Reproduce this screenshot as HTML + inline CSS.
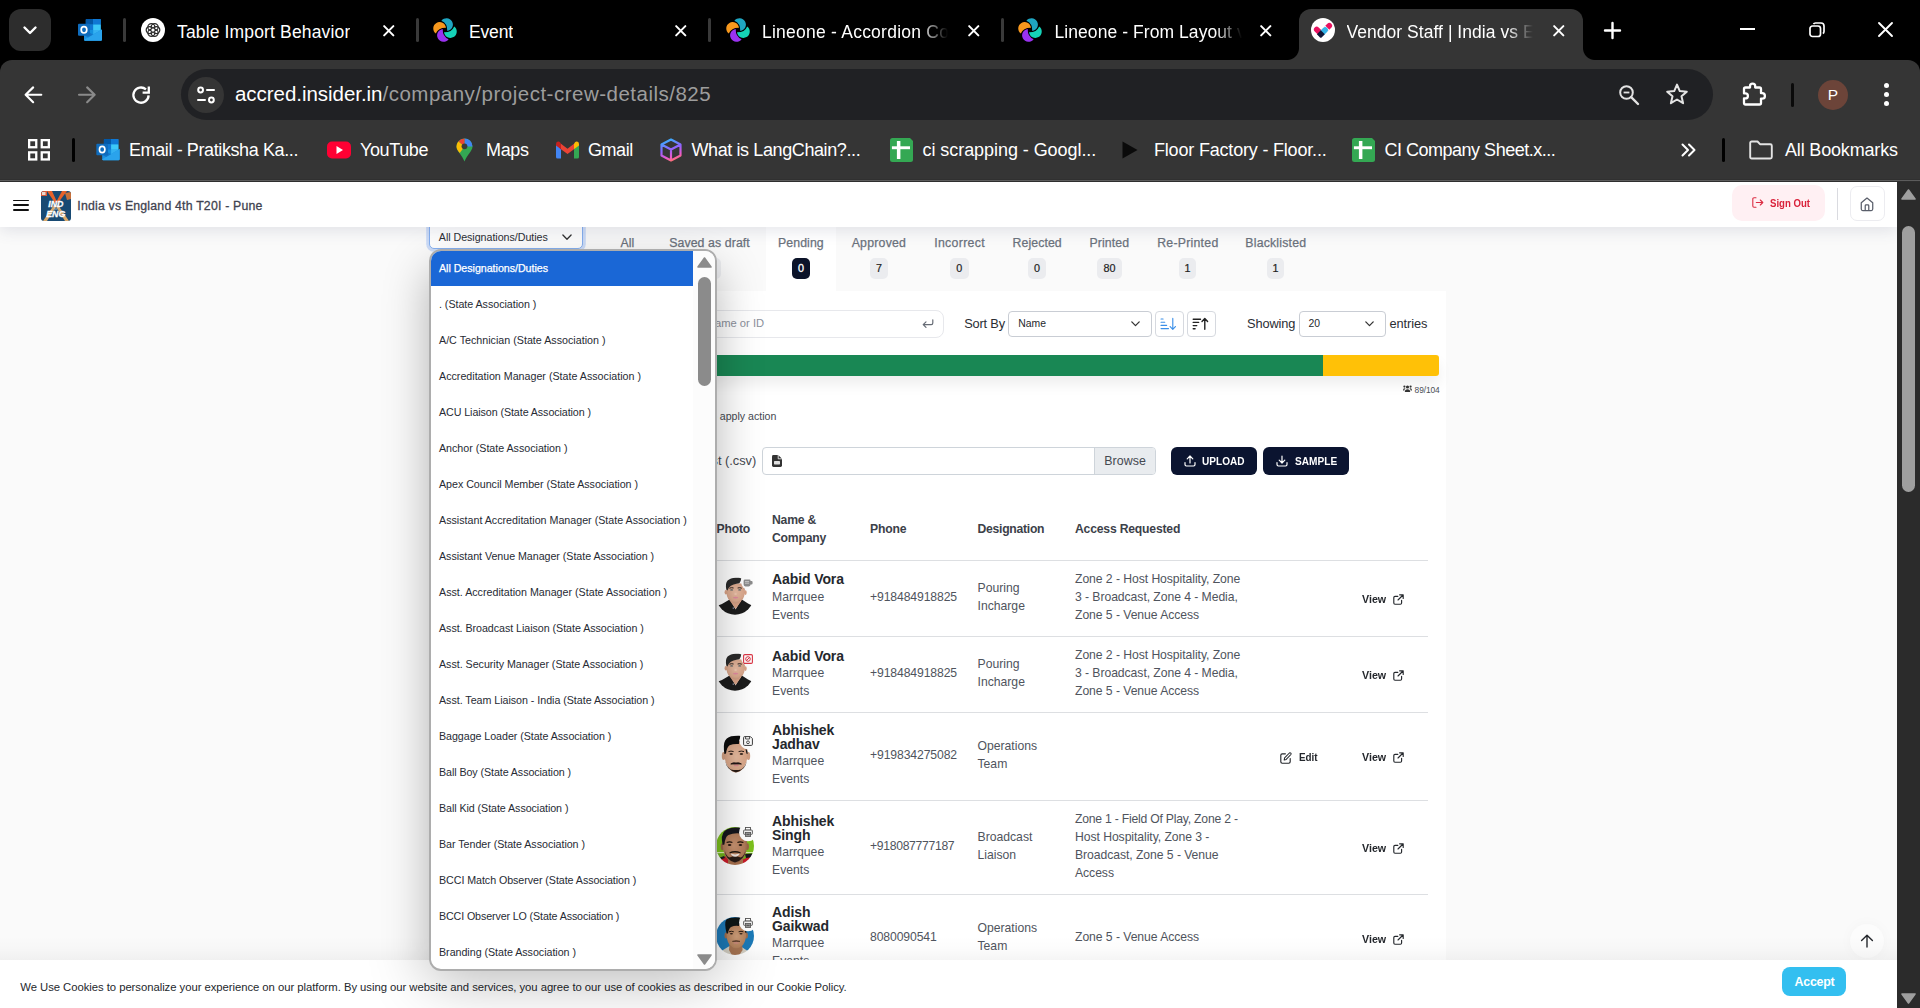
<!DOCTYPE html>
<html><head><meta charset="utf-8"><title>Vendor Staff</title>
<style>
*{box-sizing:border-box;margin:0;padding:0}
html,body{width:1920px;height:1008px;overflow:hidden;background:#fafafa;font-family:"Liberation Sans",sans-serif;}
.abs{position:absolute}
#chrome{position:absolute;left:0;top:0;width:1920px;height:182px;background:#000;color:#fff;z-index:50}
#toolbar{position:absolute;left:0;top:60px;width:1920px;height:121px;background:#353535;border-top-left-radius:12px;border-top-right-radius:12px}
#chromeline{position:absolute;left:0;top:179px;width:1920px;height:3px;background:linear-gradient(180deg,#303030 0,#303030 1px,#5c5c5c 1px,#5c5c5c 2px,#2e2e2e 2px)}
.tabtxt{position:absolute;top:20px;font-size:17.5px;line-height:24px;color:#fff;white-space:nowrap;overflow:hidden}
.tabsep{position:absolute;top:18px;width:3px;height:24px;background:#3a3a3a;border-radius:1.5px}
.bm{position:absolute;top:138px;font-size:18px;line-height:24px;color:#fff;white-space:nowrap}
#omni{position:absolute;left:180.5px;top:68.8px;width:1532.5px;height:51px;border-radius:25.5px;background:#202124}
#page{position:absolute;left:0;top:0;width:1920px;height:1008px;background:#fafafa;overflow:hidden}
.t{position:absolute;white-space:nowrap;line-height:14px;color:#4b5058}
.tab{position:absolute;top:236px;font-size:12.3px;line-height:14px;color:#6a717c;white-space:nowrap;-webkit-text-stroke:0.25px #6a717c}
.badge{position:absolute;top:258px;height:21px;border-radius:5px;background:#ebecef;color:#222;font-size:10.8px;line-height:21px;text-align:center;-webkit-text-stroke:0.2px #222}
.opt{position:absolute;left:439px;font-size:10.7px;line-height:14px;color:#272b34;white-space:nowrap}
.th{position:absolute;font-size:12.2px;font-weight:700;line-height:14px;color:#3c4149;white-space:nowrap;letter-spacing:-0.2px}
.nm{position:absolute;left:772px;font-size:14px;font-weight:700;line-height:13px;color:#25282d;white-space:nowrap;letter-spacing:-0.1px;margin-top:0.5px}
.td{position:absolute;font-size:12.2px;line-height:18px;color:#4f545d;white-space:nowrap}
.hr{position:absolute;left:716px;width:712px;height:1px;background:#dddfe2}
.view{position:absolute;left:1362px;font-size:11.4px;font-weight:700;line-height:14px;color:#25282d;transform:scaleX(0.938);transform-origin:0 0}
svg{position:absolute;overflow:visible}
</style></head><body>

<!-- ================= BROWSER CHROME ================= -->
<div id="chrome">
  <!-- tab search button -->
  <div class="abs" style="left:9px;top:9px;width:42px;height:42px;border-radius:12px;background:#2d2d2d"></div>
  <svg style="left:23px;top:26px" width="14" height="9" viewBox="0 0 14 9"><path d="M1.5 1.5 L7 7 L12.5 1.5" fill="none" stroke="#fff" stroke-width="2.4" stroke-linecap="round" stroke-linejoin="round"/></svg>

  <!-- pinned outlook tab -->
  <svg style="left:78px;top:19.2px" width="24" height="22" viewBox="0 0 24 22">
    <rect x="7.8" y="0" width="14.9" height="17.4" rx="1" fill="#1490df"/>
    <rect x="7.8" y="0" width="7.4" height="5.6" fill="#0358a7"/><rect x="15.2" y="0" width="7.5" height="5.6" fill="#0f78d4"/>
    <rect x="7.8" y="5.6" width="7.4" height="5.4" fill="#0f78d4"/><rect x="15.2" y="5.6" width="7.5" height="5.4" fill="#3cc8f8"/>
    <rect x="7.8" y="11" width="7.4" height="5" fill="#1490df"/><rect x="15.2" y="11" width="7.5" height="5" fill="#35b1f1"/>
    <path d="M6 10.4 L15 15.6 L24 10.4 V20.6 Q24 21.8 22.8 21.8 H7.2 Q6 21.8 6 20.6Z" fill="#1a8fe0"/>
    <path d="M6 20.8 L24 10.4 V20.6 Q24 21.8 22.8 21.8 H7.2 Q6 21.8 6 20.8Z" fill="#2aa3ec"/>
    <path d="M6 10.4 L15 15.6 L10 18.6 L6 16Z" fill="#1377c9"/>
    <rect x="0" y="4.8" width="12" height="12" rx="1" fill="#0f6cbd"/>
    <ellipse cx="6" cy="10.8" rx="2.8" ry="3.2" fill="none" stroke="#fff" stroke-width="1.7"/>
  </svg>
  <div class="tabsep" style="left:123px"></div>

  <!-- tab 1 -->
  <div class="abs" style="left:141px;top:18px;width:24px;height:24px;border-radius:12px;background:#fff"></div>
  <svg style="left:144px;top:21px" width="18" height="18" viewBox="0 0 18 18"><g fill="none" stroke="#2a2a2a" stroke-width="1.25"><circle cx="12.30" cy="9.00" r="3.5"/><circle cx="10.65" cy="11.86" r="3.5"/><circle cx="7.35" cy="11.86" r="3.5"/><circle cx="5.70" cy="9.00" r="3.5"/><circle cx="7.35" cy="6.14" r="3.5"/><circle cx="10.65" cy="6.14" r="3.5"/></g><circle cx="9" cy="9" r="1.6" fill="#fff"/></svg>
  <div class="tabtxt" style="left:177px;letter-spacing:0.15px">Table Import Behavior</div>
  <svg style="left:382.5px;top:24.5px" width="11.5" height="11.5" viewBox="0 0 13 13"><path d="M1.3 1.3 L11.7 11.7 M11.7 1.3 L1.3 11.7" stroke="#fff" stroke-width="2.3" stroke-linecap="round"/></svg>
  <div class="tabsep" style="left:416px"></div>

  <!-- tab 2 -->
  <svg class="pinw" style="left:433px;top:18px" width="24" height="24" viewBox="0 0 24 24"><use href="#pinwheel"/></svg>
  <div class="tabtxt" style="left:469px;letter-spacing:-0.15px">Event</div>
  <svg style="left:675px;top:24.5px" width="11.5" height="11.5" viewBox="0 0 13 13"><path d="M1.3 1.3 L11.7 11.7 M11.7 1.3 L1.3 11.7" stroke="#fff" stroke-width="2.3" stroke-linecap="round"/></svg>
  <div class="tabsep" style="left:708px"></div>

  <!-- tab 3 -->
  <svg style="left:726px;top:18px" width="24" height="24" viewBox="0 0 24 24"><use href="#pinwheel"/></svg>
  <div class="tabtxt" style="left:762px;width:190px;letter-spacing:0.237px;-webkit-mask-image:linear-gradient(90deg,#000 158px,transparent 186px)">Lineone - Accordion Com</div>
  <svg style="left:967.5px;top:24.5px" width="11.5" height="11.5" viewBox="0 0 13 13"><path d="M1.3 1.3 L11.7 11.7 M11.7 1.3 L1.3 11.7" stroke="#fff" stroke-width="2.3" stroke-linecap="round"/></svg>
  <div class="tabsep" style="left:1001px"></div>

  <!-- tab 4 -->
  <svg style="left:1018px;top:18px" width="24" height="24" viewBox="0 0 24 24"><use href="#pinwheel"/></svg>
  <div class="tabtxt" style="left:1054.5px;width:190px;letter-spacing:0.068px;-webkit-mask-image:linear-gradient(90deg,#000 160px,transparent 187px)">Lineone - From Layout vi</div>
  <svg style="left:1260px;top:24.5px" width="11.5" height="11.5" viewBox="0 0 13 13"><path d="M1.3 1.3 L11.7 11.7 M11.7 1.3 L1.3 11.7" stroke="#fff" stroke-width="2.3" stroke-linecap="round"/></svg>

  <!-- active tab -->
  <div class="abs" style="left:1299px;top:9px;width:284px;height:52px;background:#353535;border-radius:12px 12px 0 0"></div>
  <div class="abs" style="left:1287px;top:48px;width:12px;height:12px;background:radial-gradient(circle at 0 0,transparent 11.5px,#353535 12.5px)"></div>
  <div class="abs" style="left:1583px;top:48px;width:12px;height:12px;background:radial-gradient(circle at 100% 0,transparent 11.5px,#353535 12.5px)"></div>
  <div class="abs" style="left:1311px;top:18px;width:24px;height:24px;border-radius:12px;background:#fff"></div>
  <svg style="left:1311px;top:18px" width="24" height="24" viewBox="0 0 24 24">
    <path d="M5.7 11.5 L9.8 15.6" stroke="#e8125f" stroke-width="5.6" stroke-linecap="round"/>
    <path d="M16.3 9.7 L18.3 7.7" stroke="#e8125f" stroke-width="5.6" stroke-linecap="round"/>
    <path d="M14.3 7.7 L18.3 11.7 L16.3 13.7 L12.3 9.7Z" fill="#fff"/>
    <path d="M11.8 14.2 L14.1 11.9" stroke="#35b5ea" stroke-width="5.6" stroke-linecap="round"/>
    <path d="M9.8 12.3 L13.8 16.2 L10.6 19.4 Q9.8 20.2 9 19.4 L5.9 16.2Z" fill="#10183a"/>
  </svg>
  <div class="tabtxt" style="left:1346.5px;width:190px;letter-spacing:0.04px;-webkit-mask-image:linear-gradient(90deg,#000 160px,transparent 186px)">Vendor Staff | India vs En</div>
  <svg style="left:1552.8px;top:24.5px" width="11.5" height="11.5" viewBox="0 0 13 13"><path d="M1.3 1.3 L11.7 11.7 M11.7 1.3 L1.3 11.7" stroke="#fff" stroke-width="2.3" stroke-linecap="round"/></svg>

  <!-- new tab + window controls -->
  <svg style="left:1604px;top:22px" width="17" height="17" viewBox="0 0 17 17"><path d="M8.5 1 V16 M1 8.5 H16" stroke="#fff" stroke-width="2.4" stroke-linecap="round"/></svg>
  <div class="abs" style="left:1740px;top:28px;width:15px;height:2px;background:#fff"></div>
  <svg style="left:1809px;top:22px" width="16" height="16" viewBox="0 0 16 16"><rect x="1" y="4" width="10.5" height="10.5" rx="2.5" fill="none" stroke="#fff" stroke-width="1.7"/><path d="M4.5 2.2 Q5 1 6.5 1 H12 Q15 1 15 4 V9.5 Q15 11 13.8 11.5" fill="none" stroke="#fff" stroke-width="1.7"/></svg>
  <svg style="left:1878px;top:22px" width="15" height="15" viewBox="0 0 15 15"><path d="M1 1 L14 14 M14 1 L1 14" stroke="#fff" stroke-width="1.9" stroke-linecap="round"/></svg>

  <div id="toolbar"></div>
  <div id="chromeline"></div>

  <!-- nav buttons -->
  <svg style="left:23.9px;top:86.3px" width="18.3" height="17.6" viewBox="0 0 18 17"><path d="M9 1.2 L1.6 8.5 L9 15.8 M2 8.5 H17" fill="none" stroke="#fff" stroke-width="2.1" stroke-linecap="round" stroke-linejoin="round"/></svg>
  <svg style="left:77.9px;top:86.3px" width="18.3" height="17.6" viewBox="0 0 18 17"><path d="M9 1.2 L16.4 8.5 L9 15.8 M16 8.5 H1" fill="none" stroke="#8a8a8a" stroke-width="2.1" stroke-linecap="round" stroke-linejoin="round"/></svg>
  <svg style="left:131.4px;top:84.6px" width="20" height="20" viewBox="0 0 20 20"><path d="M17.6 10.4 A7.6 7.6 0 1 1 15 4.4" fill="none" stroke="#fff" stroke-width="2.3" stroke-linecap="butt"/><path d="M17.8 1.4 V7.6 H11.6" fill="none" stroke="#fff" stroke-width="2.3" stroke-linecap="butt" stroke-linejoin="miter"/></svg>

  <!-- omnibox -->
  <div id="omni"></div>
  <div class="abs" style="left:187.5px;top:76.6px;width:36px;height:36px;border-radius:18px;background:#353535"></div>
  <svg style="left:196px;top:85px" width="20" height="20" viewBox="0 0 20 20"><g fill="none" stroke="#fff" stroke-width="2" stroke-linecap="round"><circle cx="4.6" cy="5" r="2.4"/><path d="M11 5 H18"/><circle cx="15.4" cy="15" r="2.4"/><path d="M2 15 H9"/></g></svg>
  <div class="abs" style="left:235px;top:81px;font-size:20.5px;line-height:26px;white-space:nowrap;letter-spacing:-0.04px;color:#fff">accred.insider.in<span style="color:#9d9d9d;letter-spacing:0.5px">/company/project-crew-details/825</span></div>
  <svg style="left:1618px;top:84px" width="22" height="22" viewBox="0 0 22 22"><circle cx="8.5" cy="8.5" r="6.3" fill="none" stroke="#e3e3e3" stroke-width="2"/><path d="M13.2 13.2 L20 20" stroke="#e3e3e3" stroke-width="2.4" stroke-linecap="round"/><path d="M5.6 8.5 H11.4" stroke="#e3e3e3" stroke-width="1.8"/></svg>
  <svg style="left:1665px;top:82px" width="24" height="24" viewBox="0 0 24 24"><path d="M12 2.6 L14.8 9.1 L21.8 9.7 L16.5 14.3 L18.1 21.2 L12 17.5 L5.9 21.2 L7.5 14.3 L2.2 9.7 L9.2 9.1 Z" fill="none" stroke="#e3e3e3" stroke-width="2" stroke-linejoin="round"/></svg>

  <!-- extensions / profile / menu -->
  <svg style="left:1741px;top:81px" width="26" height="26" viewBox="0 0 26 26"><path d="M3 8 Q3 6.5 4.5 6.5 H9 V5.2 A2.6 2.6 0 0 1 14.2 5.2 V6.5 H18.5 Q20 6.5 20 8 V12.2 H21.2 A2.7 2.7 0 0 1 21.2 17.6 H20 V22 Q20 23.5 18.5 23.5 H4.5 Q3 23.5 3 22 V17.4 H4.4 A2.5 2.5 0 0 0 4.4 12.4 H3 Z" fill="none" stroke="#fff" stroke-width="2.3" stroke-linejoin="round"/></svg>
  <div class="abs" style="left:1790.8px;top:82.5px;width:3px;height:24px;background:#0a0a0a;border-radius:1.5px"></div>
  <div class="abs" style="left:1818px;top:80px;width:30px;height:30px;border-radius:15px;background:#6c4439;color:#fff;font-size:15.5px;line-height:30px;text-align:center">P</div>
  <div class="abs" style="left:1884px;top:83px;width:5px;height:5px;border-radius:3px;background:#fff"></div>
  <div class="abs" style="left:1884px;top:92px;width:5px;height:5px;border-radius:3px;background:#fff"></div>
  <div class="abs" style="left:1884px;top:101px;width:5px;height:5px;border-radius:3px;background:#fff"></div>

  <!-- bookmarks bar -->
  <svg style="left:28.2px;top:139.2px" width="22" height="21.6" viewBox="0 0 22 21.6"><g fill="none" stroke="#fff" stroke-width="2.3"><rect x="1.15" y="1.15" width="7.1" height="7.1"/><rect x="13.75" y="1.15" width="7.1" height="7.1"/><rect x="1.15" y="13.35" width="7.1" height="7.1"/><rect x="13.75" y="13.35" width="7.1" height="7.1"/></g></svg>
  <div class="abs" style="left:72px;top:138px;width:3px;height:24px;background:#000;border-radius:1.5px"></div>
  <svg style="left:96px;top:139.3px" width="24" height="21.4" viewBox="0 0 24 22">
    <rect x="7.8" y="0" width="14.9" height="17.4" rx="1" fill="#1490df"/>
    <rect x="7.8" y="0" width="7.4" height="5.6" fill="#0358a7"/><rect x="15.2" y="0" width="7.5" height="5.6" fill="#0f78d4"/>
    <rect x="7.8" y="5.6" width="7.4" height="5.4" fill="#0f78d4"/><rect x="15.2" y="5.6" width="7.5" height="5.4" fill="#3cc8f8"/>
    <rect x="7.8" y="11" width="7.4" height="5" fill="#1490df"/><rect x="15.2" y="11" width="7.5" height="5" fill="#35b1f1"/>
    <path d="M6 10.4 L15 15.6 L24 10.4 V20.6 Q24 21.8 22.8 21.8 H7.2 Q6 21.8 6 20.6Z" fill="#1a8fe0"/>
    <path d="M6 20.8 L24 10.4 V20.6 Q24 21.8 22.8 21.8 H7.2 Q6 21.8 6 20.8Z" fill="#2aa3ec"/>
    <path d="M6 10.4 L15 15.6 L10 18.6 L6 16Z" fill="#1377c9"/>
    <rect x="0" y="4.8" width="12" height="12" rx="1" fill="#0f6cbd"/>
    <ellipse cx="6" cy="10.8" rx="2.8" ry="3.2" fill="none" stroke="#fff" stroke-width="1.7"/>
  </svg>
  <div class="bm" style="left:129px;letter-spacing:-0.394px">Email - Pratiksha Ka...</div>
  <svg style="left:327px;top:141px" width="24" height="18" viewBox="0 0 24 18"><rect x="0" y="0.5" width="24" height="17" rx="5" fill="#f03"/><path d="M9.5 5 L16 9 L9.5 13 Z" fill="#fff"/></svg>
  <div class="bm" style="left:360px;letter-spacing:-0.376px">YouTube</div>
  <svg style="left:456px;top:138px" width="17" height="24" viewBox="0 0 17 24"><path d="M8.5 0.5 A8 8 0 0 1 16.5 8.5 C16.5 13 11 17 8.5 23.5 C6 17 0.5 13 0.5 8.5 A8 8 0 0 1 8.5 0.5Z" fill="#34a853"/><path d="M8.5 0.5 A8 8 0 0 1 16.5 8.5 L8.5 8.5Z" fill="#4285f4"/><path d="M8.5 0.5 A8 8 0 0 0 2.3 3.5 L8.5 8.5Z" fill="#ea4335"/><path d="M2.3 3.5 A8 8 0 0 0 0.5 8.5 C0.5 11 2 13 3.8 15 L8.5 8.5Z" fill="#fbbc04"/><circle cx="8.5" cy="8.3" r="2.9" fill="#3a3a3a"/></svg>
  <div class="bm" style="left:486px;letter-spacing:-0.329px">Maps</div>
  <svg style="left:556px;top:141px" width="23" height="18" viewBox="0 0 23 18"><path d="M0 3 V16 Q0 17.5 1.5 17.5 H5 V8.2 Z" fill="#4285f4"/><path d="M23 3 V16 Q23 17.5 21.5 17.5 H18 V8.2 Z" fill="#34a853"/><path d="M5 8.2 L11.5 13 L18 8.2 V2.8 L11.5 7.7 L5 2.8Z" fill="#ea4335"/><path d="M0 3 Q0 0.8 2 0.5 Q3.2 0.4 4 1.2 L5 2.8 V8.2 L0 4.5Z" fill="#c5221f"/><path d="M23 3 Q23 0.8 21 0.5 Q19.8 0.4 19 1.2 L18 2.8 V8.2 L23 4.5Z" fill="#fbbc04"/></svg>
  <div class="bm" style="left:588px;letter-spacing:-0.443px">Gmail</div>
  <svg style="left:659px;top:138px" width="24" height="24" viewBox="0 0 24 24"><defs><linearGradient id="lcg" x1="0.3" y1="0" x2="0.6" y2="1"><stop offset="0" stop-color="#38b0ff"/><stop offset="0.45" stop-color="#8f63ff"/><stop offset="0.8" stop-color="#e85ad0"/><stop offset="1" stop-color="#ff6f7a"/></linearGradient></defs><path d="M12 1.5 L21.5 6.5 V17.5 L12 22.5 L2.5 17.5 V6.5 Z M2.5 6.5 L12 11.5 L21.5 6.5 M12 11.5 V22.5" fill="none" stroke="url(#lcg)" stroke-width="2.2" stroke-linejoin="round"/></svg>
  <div class="bm" style="left:691.5px;letter-spacing:-0.398px">What is LangChain?...</div>
  <svg style="left:890px;top:138px" width="23" height="24" viewBox="0 0 23 24"><path d="M2.5 0 H20 L23 3 V21.5 Q23 24 20.5 24 H2.5 Q0 24 0 21.5 V2.5 Q0 0 2.5 0Z" fill="#34a853"/><rect x="6.9" y="3" width="3.5" height="18" fill="#fff"/><rect x="1.9" y="8.3" width="18.1" height="2.9" fill="#fff"/></svg>
  <div class="bm" style="left:922.5px;letter-spacing:-0.058px">ci scrapping - Googl...</div>
  <svg style="left:1122px;top:141px" width="16" height="18" viewBox="0 0 16 18"><path d="M0.5 0.5 L15.5 9 L0.5 17.5 Z" fill="#0a0a0a"/></svg>
  <div class="bm" style="left:1154px;letter-spacing:-0.189px">Floor Factory - Floor...</div>
  <svg style="left:1352px;top:138px" width="23" height="24" viewBox="0 0 23 24"><path d="M2.5 0 H20 L23 3 V21.5 Q23 24 20.5 24 H2.5 Q0 24 0 21.5 V2.5 Q0 0 2.5 0Z" fill="#34a853"/><rect x="6.9" y="3" width="3.5" height="18" fill="#fff"/><rect x="1.9" y="8.3" width="18.1" height="2.9" fill="#fff"/></svg>
  <div class="bm" style="left:1384.5px;letter-spacing:-0.493px">CI Company Sheet.x...</div>
  <svg style="left:1681px;top:143px" width="15" height="14" viewBox="0 0 15 14"><path d="M1.5 1.5 L7 7 L1.5 12.5 M8 1.5 L13.5 7 L8 12.5" fill="none" stroke="#fff" stroke-width="2" stroke-linecap="round" stroke-linejoin="round"/></svg>
  <div class="abs" style="left:1722px;top:138px;width:3px;height:24px;background:#000;border-radius:1.5px"></div>
  <svg style="left:1749px;top:140px" width="24" height="20" viewBox="0 0 24 20"><path d="M1.2 3 Q1.2 1.5 2.7 1.5 H8.5 L11 4.2 H21.3 Q22.8 4.2 22.8 5.7 V17 Q22.8 18.5 21.3 18.5 H2.7 Q1.2 18.5 1.2 17 Z" fill="none" stroke="#e3e3e3" stroke-width="1.9" stroke-linejoin="round"/></svg>
  <div class="bm" style="left:1785px;letter-spacing:-0.172px">All Bookmarks</div>
</div>

<!-- shared defs -->
<svg width="0" height="0" style="left:-10px;top:-10px"><defs>
  <g id="pinwheel">
    <path id="pw1" d="M13 9.7 A6.4 6.4 0 1 0 2.8 15.6 Q5.3 9.55 13 9.7Z" fill="#f7981d"/>
    <path d="M13 9.7 A6.4 6.4 0 1 0 2.8 15.6 Q5.3 9.55 13 9.7Z" fill="#1fa6c2" transform="rotate(90 12 12)"/>
    <path d="M13 9.7 A6.4 6.4 0 1 0 2.8 15.6 Q5.3 9.55 13 9.7Z" fill="#15d2b8" transform="rotate(180 12 12)"/>
    <path d="M13 9.7 A6.4 6.4 0 1 0 2.8 15.6 Q5.3 9.55 13 9.7Z" fill="#9a32f0" transform="rotate(270 12 12)"/>
  </g>
</defs></svg>

<!-- ================= PAGE ================= -->
<div id="page">

<!-- card -->
<div class="abs" style="left:601px;top:291px;width:845px;height:717px;background:#fff"></div>
<!-- pending tab bg -->
<div class="abs" style="left:766px;top:227px;width:70px;height:64px;background:#fff"></div>

<!-- select box -->
<div class="abs" style="left:428.8px;top:222px;width:154px;height:27px;border:1.5px solid #86b0f0;border-radius:5px;background:#fff;box-shadow:0 0 0 2.8px rgba(110,160,245,0.32)"></div>
<div class="t" style="left:438.8px;top:229.8px;font-size:10.7px;color:#2b2e34;letter-spacing:-0.04px">All Designations/Duties</div>
<svg style="left:562px;top:234px" width="10" height="7" viewBox="0 0 10 7"><path d="M0.9 1 L5 5.2 L9.1 1" fill="none" stroke="#333" stroke-width="1.3" stroke-linecap="round" stroke-linejoin="round"/></svg>
<!-- header -->
<div class="abs" style="left:0;top:182px;width:1897px;height:45px;background:#fff;box-shadow:0 4px 14px rgba(60,70,110,0.13)"></div>
<div class="abs" style="left:13px;top:199.6px;width:15.5px;height:1.5px;background:#111;border-radius:1px"></div>
<div class="abs" style="left:13px;top:204.3px;width:15.5px;height:1.5px;background:#111;border-radius:1px"></div>
<div class="abs" style="left:13px;top:209px;width:15.5px;height:1.5px;background:#111;border-radius:1px"></div>
<svg style="left:41px;top:191px" width="30" height="30" viewBox="0 0 30 30">
  <defs><clipPath id="lgc"><rect width="30" height="30" rx="3"/></clipPath></defs>
  <g clip-path="url(#lgc)"><rect width="30" height="30" fill="#184a73"/>
  <path d="M2 30 L13 14 L15 15.5 L6 30Z" fill="#d9a86a"/><path d="M28 30 L17 14 L15 15.5 L24 30Z" fill="#d9a86a"/>
  <path d="M6 0 L14 12 L16 11 L11 0Z" fill="#e8622a"/><path d="M26 0 L17 12 L15.5 10.5 L21 0Z" fill="#e8622a"/>
  <path d="M24 2 L30 1 L30 8 L26 9Z" fill="#c8703a"/><rect x="0" y="0" width="6" height="5" fill="#d65a3a"/>
  <rect x="1" y="1" width="3.5" height="3" fill="#e9d9d0"/>
  <text x="14.8" y="16.2" text-anchor="middle" font-family="Liberation Sans" font-weight="700" font-style="italic" font-size="8.8" fill="#fff" stroke="#fff" stroke-width="0.3">IND</text>
  <text x="14.8" y="26.4" text-anchor="middle" font-family="Liberation Sans" font-weight="700" font-style="italic" font-size="8.8" fill="#fff" stroke="#fff" stroke-width="0.3">ENG</text>
  <rect x="13" y="17.6" width="3.6" height="0.8" fill="#cfd8e0"/></g>
</svg>
<div class="t" style="left:77.3px;top:199px;font-size:12.3px;letter-spacing:0.2px;color:#3f4350;-webkit-text-stroke:0.3px #3f4350">India vs England 4th T20I - Pune</div>
<!-- sign out -->
<div class="abs" style="left:1732px;top:185px;width:93px;height:36px;border-radius:10px;background:#fff0f3"></div>
<svg style="left:1752px;top:197px" width="12" height="11" viewBox="0 0 12 11"><path d="M4 0.8 H2 Q0.8 0.8 0.8 2 V9 Q0.8 10.2 2 10.2 H4" fill="none" stroke="#dc2c42" stroke-width="1.1" stroke-linecap="round"/><path d="M4.3 5.5 H10.8 M8.3 3 L10.8 5.5 L8.3 8" fill="none" stroke="#dc2c42" stroke-width="1.1" stroke-linecap="round" stroke-linejoin="round"/></svg>
<div class="t" style="left:1769.5px;top:195.5px;font-size:10.8px;font-weight:700;color:#d9213a;transform:scaleX(0.89);transform-origin:0 0">Sign Out</div>
<div class="abs" style="left:1837px;top:188px;width:1px;height:32px;background:#dadbe0"></div>
<div class="abs" style="left:1850px;top:186px;width:35px;height:35px;border-radius:7px;background:#fff;border:1px solid #ececf0"></div>
<svg style="left:1860.4px;top:197px" width="14" height="14.6" viewBox="0 0 13 14"><path d="M1 5.6 L6.5 1 L12 5.6 V11.6 Q12 13 10.6 13 H2.4 Q1 13 1 11.6 Z" fill="none" stroke="#5a5f6b" stroke-width="1.2" stroke-linejoin="round"/><path d="M4.8 13 V8.4 Q4.8 7.6 5.6 7.6 H7.4 Q8.2 7.6 8.2 8.4 V13" fill="none" stroke="#5a5f6b" stroke-width="1.2"/></svg>

<!-- status tabs -->
<div class="tab" style="left:620.5px">All</div>
<div class="tab" style="left:669.2px;letter-spacing:0.1px">Saved as draft</div>
<div class="tab" style="left:778px;letter-spacing:0.09px">Pending</div>
<div class="tab" style="left:851.7px;letter-spacing:0.23px">Approved</div>
<div class="tab" style="left:934.2px;letter-spacing:0.32px">Incorrect</div>
<div class="tab" style="left:1012.5px;letter-spacing:0.09px">Rejected</div>
<div class="tab" style="left:1089.5px;letter-spacing:0.1px">Printed</div>
<div class="tab" style="left:1157.2px;letter-spacing:0.25px">Re-Printed</div>
<div class="tab" style="left:1245.3px;letter-spacing:0.2px">Blacklisted</div>
<div class="badge" style="left:699px;width:22px">16</div>
<div class="badge" style="left:792px;width:18px;background:#0b1329;color:#fff;-webkit-text-stroke:0.3px #fff">0</div>
<div class="badge" style="left:870px;width:18px">7</div>
<div class="badge" style="left:950px;width:18.5px">0</div>
<div class="badge" style="left:1028px;width:18px">0</div>
<div class="badge" style="left:1097px;width:25px">80</div>
<div class="badge" style="left:1179px;width:17px">1</div>
<div class="badge" style="left:1267px;width:17px">1</div>

<!-- search / sort row -->
<div class="abs" style="left:601px;top:309.5px;width:342.5px;height:28px;border:1px solid #e7e8ec;border-radius:8px;background:#fff"></div>
<div class="t" style="left:715px;top:315.6px;font-size:11.2px;color:#8b909b">ame or ID</div>
<svg style="left:922px;top:319px" width="12" height="10" viewBox="0 0 12 10"><path d="M10.8 0.8 V4 Q10.8 5.6 9.2 5.6 H1.4 M4 2.8 L1.2 5.6 L4 8.4" fill="none" stroke="#666b75" stroke-width="1.2" stroke-linecap="round" stroke-linejoin="round"/></svg>
<div class="t" style="left:964.2px;top:316.5px;font-size:12.8px;letter-spacing:-0.17px;color:#2a2d33">Sort By</div>
<div class="abs" style="left:1008px;top:311px;width:144px;height:25.5px;border:1px solid #c9cdd4;border-radius:4px;background:#fff"></div>
<div class="t" style="left:1018.3px;top:316.5px;font-size:10.4px;color:#25282d">Name</div>
<svg style="left:1131px;top:320.5px" width="9" height="6" viewBox="0 0 9 6"><path d="M0.8 0.9 L4.5 4.6 L8.2 0.9" fill="none" stroke="#333" stroke-width="1.3" stroke-linecap="round" stroke-linejoin="round"/></svg>
<div class="abs" style="left:1155px;top:311px;width:28.5px;height:25.5px;border:1px solid #d6d9df;border-radius:4px;background:#fff"></div>
<svg style="left:1160.3px;top:317.2px" width="17" height="14" viewBox="0 0 18 15"><g stroke="#3b8fe8" stroke-width="1.2" fill="none" stroke-linecap="round"><path d="M1 2.2 H3.2 M1 5.6 H5 M1 9 H7 M1 12.4 H9"/><path d="M13.6 1.5 V13 M10.8 10.2 L13.6 13.2 L16.4 10.2" stroke-linejoin="round"/></g></svg>
<div class="abs" style="left:1187px;top:311px;width:28.5px;height:25.5px;border:1px solid #d6d9df;border-radius:4px;background:#fff"></div>
<svg style="left:1192px;top:317.2px" width="17" height="14" viewBox="0 0 18 15"><g stroke="#222" stroke-width="1.5" fill="none" stroke-linecap="round"><path d="M1.2 2.4 H9 M1.2 5.8 H7 M1.2 9.2 H5 M1.2 12.6 H3.2"/><path d="M13.6 13.2 V2 M10.6 4.8 L13.6 1.6 L16.6 4.8" stroke-linejoin="round"/></g></svg>
<div class="t" style="left:1247px;top:316.5px;font-size:12.8px;letter-spacing:-0.1px;color:#2a2d33">Showing</div>
<div class="abs" style="left:1299px;top:311px;width:86.5px;height:25.5px;border:1px solid #c9cdd4;border-radius:4px;background:#fff"></div>
<div class="t" style="left:1308.5px;top:316.5px;font-size:10.4px;color:#25282d">20</div>
<svg style="left:1365px;top:320.5px" width="9" height="6" viewBox="0 0 9 6"><path d="M0.8 0.9 L4.5 4.6 L8.2 0.9" fill="none" stroke="#333" stroke-width="1.3" stroke-linecap="round" stroke-linejoin="round"/></svg>
<div class="t" style="left:1389.5px;top:316.5px;font-size:12.8px;letter-spacing:-0.1px;color:#2a2d33">entries</div>

<!-- progress -->
<div class="abs" style="left:601px;top:355px;width:838px;height:21px;border-radius:3px;background:linear-gradient(90deg,#198754 0,#198754 722px,#ffc107 722px);box-shadow:0 8px 14px rgba(0,0,0,0.07)"></div>
<svg style="left:1403px;top:385px" width="9" height="7" viewBox="0 0 9 7"><circle cx="4.5" cy="2" r="1.6" fill="#333"/><circle cx="1.4" cy="1.6" r="1.1" fill="#333"/><circle cx="7.6" cy="1.6" r="1.1" fill="#333"/><path d="M1.8 7 Q1.8 4.2 4.5 4.2 Q7.2 4.2 7.2 7Z" fill="#333"/><path d="M0 5.4 Q0 3.2 1.6 3.2 L2.6 3.6 Q1.4 4.4 1.3 5.4Z M9 5.4 Q9 3.2 7.4 3.2 L6.4 3.6 Q7.6 4.4 7.7 5.4Z" fill="#333"/></svg>
<div class="t" style="left:1414.6px;top:382.5px;font-size:8.4px;color:#4a4e56;letter-spacing:-0.1px">89/104</div>

<div class="t" style="left:711px;top:408.5px;font-size:10.6px;color:#454951">o apply action</div>
<div class="t" style="left:711.5px;top:453.5px;font-size:12.8px;color:#454951">st (.csv)</div>
<div class="abs" style="left:762px;top:447px;width:394px;height:28px;border:1px solid #ced4da;border-radius:4px;background:#fff"></div>
<div class="abs" style="left:1094px;top:448px;width:61px;height:26px;border-left:1px solid #ced4da;border-radius:0 3px 3px 0;background:#e9ecef"></div>
<div class="t" style="left:1104.2px;top:453.5px;font-size:12.4px;color:#454951;letter-spacing:0.1px">Browse</div>
<svg style="left:771.5px;top:455px" width="10" height="12" viewBox="0 0 10 12"><path d="M1.4 0 H6.2 L10 3.8 V10.6 Q10 12 8.6 12 H1.4 Q0 12 0 10.6 V1.4 Q0 0 1.4 0Z" fill="#333"/><path d="M6.2 0 V3.8 H10" fill="none" stroke="#fff" stroke-width="0.8"/><rect x="2" y="6" width="6" height="3.4" rx="0.6" fill="#fff" opacity="0.85"/></svg>
<!-- buttons -->
<div class="abs" style="left:1171px;top:447px;width:86px;height:28px;border-radius:6px;background:#0b1430"></div>
<svg style="left:1183.5px;top:455px" width="12" height="12" viewBox="0 0 12 12"><path d="M1 7.6 V9.6 Q1 11 2.4 11 H9.6 Q11 11 11 9.6 V7.6 M6 8 V1.2 M3.2 3.8 L6 1 L8.8 3.8" fill="none" stroke="#fff" stroke-width="1.2" stroke-linecap="round" stroke-linejoin="round"/></svg>
<div class="t" style="left:1202.4px;top:453.5px;font-size:11.4px;font-weight:700;color:#fff;transform:scaleX(0.884);transform-origin:0 0">UPLOAD</div>
<div class="abs" style="left:1263px;top:447px;width:86px;height:28px;border-radius:6px;background:#0b1430"></div>
<svg style="left:1275.5px;top:455px" width="12" height="12" viewBox="0 0 12 12"><path d="M1 7.6 V9.6 Q1 11 2.4 11 H9.6 Q11 11 11 9.6 V7.6 M6 1 V7.8 M3.2 5.2 L6 8 L8.8 5.2" fill="none" stroke="#fff" stroke-width="1.2" stroke-linecap="round" stroke-linejoin="round"/></svg>
<div class="t" style="left:1294.6px;top:453.5px;font-size:11.4px;font-weight:700;color:#fff;transform:scaleX(0.888);transform-origin:0 0">SAMPLE</div>

<!-- table header -->
<div class="th" style="left:716.5px;top:522px">Photo</div>
<div class="th" style="left:772px;top:513px">Name &amp;</div>
<div class="th" style="left:772px;top:530.5px">Company</div>
<div class="th" style="left:870px;top:522px">Phone</div>
<div class="th" style="left:977.5px;top:522px;letter-spacing:-0.27px">Designation</div>
<div class="th" style="left:1075px;top:522px">Access Requested</div>
<div class="hr" style="top:560px"></div>
<div class="hr" style="top:636px"></div>
<div class="hr" style="top:712px"></div>
<div class="hr" style="top:800px"></div>
<div class="hr" style="top:894px"></div>
<div class="nm" style="top:572.5px">Aabid Vora</div><div class="td" style="left:772px;top:588px">Marrquee</div><div class="td" style="left:772px;top:606px">Events</div><div class="td" style="left:870px;top:588px;letter-spacing:-0.11px">+918484918825</div><div class="td" style="left:977.5px;top:579px">Pouring</div><div class="td" style="left:977.5px;top:596.8px">Incharge</div><div class="td" style="left:1075px;top:569.8px;letter-spacing:-0.06px">Zone 2 - Host Hospitality, Zone</div><div class="td" style="left:1075px;top:588px;letter-spacing:-0.06px">3 - Broadcast, Zone 4 - Media,</div><div class="td" style="left:1075px;top:606px;letter-spacing:-0.06px">Zone 5 - Venue Access</div><div class="view" style="top:591.5px">View</div><svg style="left:1393px;top:593.5px" width="11" height="11" viewBox="0 0 11 11"><path d="M8.6 6.2 V9 Q8.6 10.2 7.4 10.2 H2 Q0.8 10.2 0.8 9 V3.6 Q0.8 2.4 2 2.4 H4.8" fill="none" stroke="#25282d" stroke-width="1.15" stroke-linecap="round"/><path d="M6.6 0.8 H10.2 V4.4 M10 1 L5 6" fill="none" stroke="#25282d" stroke-width="1.15" stroke-linecap="round" stroke-linejoin="round"/></svg><div class="nm" style="top:649.0px">Aabid Vora</div><div class="td" style="left:772px;top:664px">Marrquee</div><div class="td" style="left:772px;top:682px">Events</div><div class="td" style="left:870px;top:664px;letter-spacing:-0.11px">+918484918825</div><div class="td" style="left:977.5px;top:655px">Pouring</div><div class="td" style="left:977.5px;top:673px">Incharge</div><div class="td" style="left:1075px;top:646px;letter-spacing:-0.06px">Zone 2 - Host Hospitality, Zone</div><div class="td" style="left:1075px;top:664px;letter-spacing:-0.06px">3 - Broadcast, Zone 4 - Media,</div><div class="td" style="left:1075px;top:682px;letter-spacing:-0.06px">Zone 5 - Venue Access</div><div class="view" style="top:667.5px">View</div><svg style="left:1393px;top:669.5px" width="11" height="11" viewBox="0 0 11 11"><path d="M8.6 6.2 V9 Q8.6 10.2 7.4 10.2 H2 Q0.8 10.2 0.8 9 V3.6 Q0.8 2.4 2 2.4 H4.8" fill="none" stroke="#25282d" stroke-width="1.15" stroke-linecap="round"/><path d="M6.6 0.8 H10.2 V4.4 M10 1 L5 6" fill="none" stroke="#25282d" stroke-width="1.15" stroke-linecap="round" stroke-linejoin="round"/></svg><div class="nm" style="top:723.7px">Abhishek</div><div class="nm" style="top:737.4px">Jadhav</div><div class="td" style="left:772px;top:752.3px">Marrquee</div><div class="td" style="left:772px;top:770px">Events</div><div class="td" style="left:870px;top:746px;letter-spacing:-0.11px">+919834275082</div><div class="td" style="left:977.5px;top:737px">Operations</div><div class="td" style="left:977.5px;top:755px">Team</div><svg style="left:1280px;top:752px" width="12" height="12" viewBox="0 0 12 12"><path d="M5.4 1.8 H2.2 Q0.8 1.8 0.8 3.2 V9.8 Q0.8 11.2 2.2 11.2 H8.8 Q10.2 11.2 10.2 9.8 V6.6" fill="none" stroke="#25282d" stroke-width="1.15" stroke-linecap="round"/><path d="M4.2 8 L4.6 5.8 L9.4 1 Q10.1 0.4 10.8 1.1 Q11.5 1.8 10.9 2.5 L6.2 7.4 Z" fill="none" stroke="#25282d" stroke-width="1.05" stroke-linejoin="round"/></svg><div class="view" style="left:1299.3px;top:749.9px;transform:scaleX(0.865)">Edit</div><div class="view" style="top:749.9px">View</div><svg style="left:1393px;top:751.9px" width="11" height="11" viewBox="0 0 11 11"><path d="M8.6 6.2 V9 Q8.6 10.2 7.4 10.2 H2 Q0.8 10.2 0.8 9 V3.6 Q0.8 2.4 2 2.4 H4.8" fill="none" stroke="#25282d" stroke-width="1.15" stroke-linecap="round"/><path d="M6.6 0.8 H10.2 V4.4 M10 1 L5 6" fill="none" stroke="#25282d" stroke-width="1.15" stroke-linecap="round" stroke-linejoin="round"/></svg><div class="nm" style="top:814.5px">Abhishek</div><div class="nm" style="top:828.6px">Singh</div><div class="td" style="left:772px;top:842.8px">Marrquee</div><div class="td" style="left:772px;top:861px">Events</div><div class="td" style="left:870px;top:836.5px;letter-spacing:-0.32px">+918087777187</div><div class="td" style="left:977.5px;top:828px">Broadcast</div><div class="td" style="left:977.5px;top:846px">Liaison</div><div class="td" style="left:1075px;top:809.8px;letter-spacing:-0.22px">Zone 1 - Field Of Play, Zone 2 -</div><div class="td" style="left:1075px;top:828px;letter-spacing:-0.06px">Host Hospitality, Zone 3 -</div><div class="td" style="left:1075px;top:846px;letter-spacing:-0.06px">Broadcast, Zone 5 - Venue</div><div class="td" style="left:1075px;top:864px;letter-spacing:-0.06px">Access</div><div class="view" style="top:841.1px">View</div><svg style="left:1393px;top:843.1px" width="11" height="11" viewBox="0 0 11 11"><path d="M8.6 6.2 V9 Q8.6 10.2 7.4 10.2 H2 Q0.8 10.2 0.8 9 V3.6 Q0.8 2.4 2 2.4 H4.8" fill="none" stroke="#25282d" stroke-width="1.15" stroke-linecap="round"/><path d="M6.6 0.8 H10.2 V4.4 M10 1 L5 6" fill="none" stroke="#25282d" stroke-width="1.15" stroke-linecap="round" stroke-linejoin="round"/></svg><div class="nm" style="top:905.7px">Adish</div><div class="nm" style="top:919.1px">Gaikwad</div><div class="td" style="left:772px;top:934px">Marrquee</div><div class="td" style="left:772px;top:952px">Events</div><div class="td" style="left:870px;top:927.8px;letter-spacing:-0.11px">8080090541</div><div class="td" style="left:977.5px;top:919px">Operations</div><div class="td" style="left:977.5px;top:937px">Team</div><div class="td" style="left:1075px;top:927.8px;letter-spacing:-0.06px">Zone 5 - Venue Access</div><div class="view" style="top:931.8px">View</div><svg style="left:1393px;top:933.8px" width="11" height="11" viewBox="0 0 11 11"><path d="M8.6 6.2 V9 Q8.6 10.2 7.4 10.2 H2 Q0.8 10.2 0.8 9 V3.6 Q0.8 2.4 2 2.4 H4.8" fill="none" stroke="#25282d" stroke-width="1.15" stroke-linecap="round"/><path d="M6.6 0.8 H10.2 V4.4 M10 1 L5 6" fill="none" stroke="#25282d" stroke-width="1.15" stroke-linecap="round" stroke-linejoin="round"/></svg><svg style="left:715.5px;top:577.3px" width="38" height="38" viewBox="0 0 38 38"><defs><clipPath id="ca1"><circle cx="19" cy="19" r="18.7"/></clipPath><filter id="bla1" x="-10%" y="-10%" width="120%" height="120%"><feGaussianBlur stdDeviation="0.45"/></filter><radialGradient id="ska1" cx="0.5" cy="0.45" r="0.6"><stop offset="0" stop-color="#e8bca3"/><stop offset="0.7" stop-color="#dba98e"/><stop offset="1" stop-color="#c4927a"/></radialGradient></defs>
<g clip-path="url(#ca1)"><g filter="url(#bla1)"><rect x="-2" y="-2" width="42" height="42" fill="#fff"/>
<path d="M-2 40 V30 Q2 28.6 6 27 L13.6 22.6 L15 24 L19.6 32.4 L24.4 24 L25.8 22.4 L32 26.6 Q36 28.8 40 30 V40Z" fill="#1a1a1b"/>
<path d="M14.4 20 H25 V24.4 L19.6 32 L14.4 24.6Z" fill="#d9a286"/>
<path d="M10.3 12 Q10 7 13 6.5 H26.5 Q29 7 28.9 12 Q29.2 20 25.6 23.6 Q22.6 26.4 19.7 26.4 Q16.6 26.4 13.6 23.6 Q10 20 10.3 12Z" fill="url(#ska1)"/>
<ellipse cx="9.9" cy="15.2" rx="1.3" ry="2.3" fill="#d9a286"/><ellipse cx="29.4" cy="15.6" rx="1.3" ry="2.3" fill="#d9a286"/>
<path d="M10.4 12.4 Q9 6.5 11.6 3.6 Q14.5 0.6 20 0.7 L25.4 0.4 Q25 4 23.4 6.2 Q20.6 6.4 17.6 7.6 Q14.4 8.6 13 10.6 Q12 12 11.6 13.4Z" fill="#2a2a2a"/>
<path d="M13.4 11.2 Q15.4 10.3 17.6 11 M21.6 11 Q23.8 10.3 25.8 11.2" stroke="#2b211d" stroke-width="1" fill="none"/>
<ellipse cx="15.6" cy="12.9" rx="1.5" ry="0.6" fill="#4e5d63"/><ellipse cx="23.6" cy="12.9" rx="1.5" ry="0.6" fill="#4e5d63"/>
<ellipse cx="19.6" cy="17" rx="1.3" ry="0.9" fill="#f0c8b2"/>
<ellipse cx="19.6" cy="20.6" rx="2.6" ry="0.9" fill="#e08aa0"/>
<rect x="16.6" y="30.6" width="1.4" height="1" fill="#aeb4c8"/>
</g></g><circle cx="32.6" cy="5.6" r="7.4" fill="#fff"/></svg><svg style="left:742.8px;top:578.8px" width="10" height="8" viewBox="0 0 10 8"><path d="M0.6 2 Q0.6 0.6 2 0.6 H6.4 Q7.6 0.6 7.6 2 H8.6 Q9.6 2 9.6 3.2 V4.2 Q9.6 5.4 8.4 5.4 H7.6 Q7.4 7.4 5.6 7.4 H2.4 Q0.6 7.4 0.6 5.6Z" fill="#8d8d8d"/><path d="M2 2.6 H6 M2 4.2 H6" stroke="#d8d8d8" stroke-width="0.8"/></svg><svg style="left:715.5px;top:653.3px" width="38" height="38" viewBox="0 0 38 38"><defs><clipPath id="ca2"><circle cx="19" cy="19" r="18.7"/></clipPath><filter id="bla2" x="-10%" y="-10%" width="120%" height="120%"><feGaussianBlur stdDeviation="0.45"/></filter><radialGradient id="ska2" cx="0.5" cy="0.45" r="0.6"><stop offset="0" stop-color="#e8bca3"/><stop offset="0.7" stop-color="#dba98e"/><stop offset="1" stop-color="#c4927a"/></radialGradient></defs>
<g clip-path="url(#ca2)"><g filter="url(#bla2)"><rect x="-2" y="-2" width="42" height="42" fill="#fff"/>
<path d="M-2 40 V30 Q2 28.6 6 27 L13.6 22.6 L15 24 L19.6 32.4 L24.4 24 L25.8 22.4 L32 26.6 Q36 28.8 40 30 V40Z" fill="#1a1a1b"/>
<path d="M14.4 20 H25 V24.4 L19.6 32 L14.4 24.6Z" fill="#d9a286"/>
<path d="M10.3 12 Q10 7 13 6.5 H26.5 Q29 7 28.9 12 Q29.2 20 25.6 23.6 Q22.6 26.4 19.7 26.4 Q16.6 26.4 13.6 23.6 Q10 20 10.3 12Z" fill="url(#ska2)"/>
<ellipse cx="9.9" cy="15.2" rx="1.3" ry="2.3" fill="#d9a286"/><ellipse cx="29.4" cy="15.6" rx="1.3" ry="2.3" fill="#d9a286"/>
<path d="M10.4 12.4 Q9 6.5 11.6 3.6 Q14.5 0.6 20 0.7 L25.4 0.4 Q25 4 23.4 6.2 Q20.6 6.4 17.6 7.6 Q14.4 8.6 13 10.6 Q12 12 11.6 13.4Z" fill="#2a2a2a"/>
<path d="M13.4 11.2 Q15.4 10.3 17.6 11 M21.6 11 Q23.8 10.3 25.8 11.2" stroke="#2b211d" stroke-width="1" fill="none"/>
<ellipse cx="15.6" cy="12.9" rx="1.5" ry="0.6" fill="#4e5d63"/><ellipse cx="23.6" cy="12.9" rx="1.5" ry="0.6" fill="#4e5d63"/>
<ellipse cx="19.6" cy="17" rx="1.3" ry="0.9" fill="#f0c8b2"/>
<ellipse cx="19.6" cy="20.6" rx="2.6" ry="0.9" fill="#e08aa0"/>
<rect x="16.6" y="30.6" width="1.4" height="1" fill="#aeb4c8"/>
</g></g><circle cx="32.6" cy="5.6" r="7.4" fill="#fff"/></svg><svg style="left:743.2px;top:654.2px" width="10" height="10" viewBox="0 0 10 10"><rect x="0.6" y="0.6" width="8.8" height="8.8" rx="1.2" fill="#fff" stroke="#dc3545" stroke-width="1.1"/><circle cx="5" cy="5" r="2.3" fill="none" stroke="#dc3545" stroke-width="1"/><path d="M3.4 6.6 L6.6 3.4" stroke="#dc3545" stroke-width="1"/></svg><svg style="left:716px;top:735px" width="38" height="38" viewBox="0 0 38 38"><defs><clipPath id="c3"><circle cx="19" cy="19" r="19"/></clipPath><filter id="bl3" x="-10%" y="-10%" width="120%" height="120%"><feGaussianBlur stdDeviation="0.5"/></filter><radialGradient id="sk3" cx="0.5" cy="0.5" r="0.6"><stop offset="0" stop-color="#e6bb9f"/><stop offset="0.75" stop-color="#d9a688"/><stop offset="1" stop-color="#c08d70"/></radialGradient></defs>
<g clip-path="url(#c3)"><g filter="url(#bl3)"><rect x="-2" y="-2" width="42" height="42" fill="#fff"/>
<ellipse cx="7.6" cy="21" rx="1.8" ry="4" fill="#d2a083"/><ellipse cx="32.4" cy="21" rx="1.8" ry="4" fill="#d2a083"/>
<path d="M8.6 16 Q8 8 12 6 H28 Q31.6 8 31.4 16 Q32 27 27.4 33 Q23.6 37.6 20 37.6 Q16.4 37.6 12.6 33 Q8 27 8.6 16Z" fill="url(#sk3)"/>
<path d="M8.4 19 Q7 9 9.2 5.4 Q12 1.2 18 1 L24.4 0.6 Q24 5 22.8 9 Q17.4 8.6 13.6 10.2 Q10.8 12 10 18.6Z" fill="#0e0e0f"/>
<path d="M29.6 14 Q31.6 14.6 31.6 19 L30.4 18.4Z" fill="#1a1a1a"/>
<path d="M9.4 26 Q10 34.6 20 37.4 Q30 34.6 30.8 26 Q29.4 32.4 25 34.4 Q20 35.8 15 34.4 Q10.6 32.4 9.4 26Z" fill="#2c1f19"/>
<path d="M14.8 29 Q17 27.2 20 28 Q23 27.2 25.4 29 Q22.6 28.8 20 29.2 Q17.4 28.8 14.8 29Z" fill="#241915" stroke="#241915" stroke-width="0.9"/>
<ellipse cx="20.2" cy="30.4" rx="2.6" ry="0.9" fill="#d98c8c"/>
<path d="M12.4 16.6 Q15 15.6 17.6 16.6 M22.6 16.6 Q25.4 15.6 28 16.6" stroke="#2c1f19" stroke-width="1" fill="none"/>
<ellipse cx="15.2" cy="19" rx="1.7" ry="0.9" fill="#3c2a22"/><ellipse cx="25.4" cy="19" rx="1.7" ry="0.9" fill="#3c2a22"/>
</g></g><circle cx="32" cy="5.6" r="8.6" fill="#fff"/></svg>
<svg style="left:743px;top:735.8px" width="10" height="10" viewBox="0 0 10 10"><path d="M0.6 1.6 Q0.6 0.6 1.6 0.6 H7.4 L9.4 2.6 V8.4 Q9.4 9.4 8.4 9.4 H1.6 Q0.6 9.4 0.6 8.4Z" fill="none" stroke="#3c3c3c" stroke-width="1"/><path d="M2.6 0.8 V3 H6.6 V0.8" fill="none" stroke="#3c3c3c" stroke-width="0.9"/><circle cx="5" cy="6.3" r="1.4" fill="none" stroke="#3c3c3c" stroke-width="0.9"/></svg><svg style="left:716px;top:826.5px" width="38" height="38" viewBox="0 0 38 38"><defs><clipPath id="c4"><circle cx="19" cy="19" r="19"/></clipPath><filter id="bl4" x="-10%" y="-10%" width="120%" height="120%"><feGaussianBlur stdDeviation="0.55"/></filter><radialGradient id="sk4" cx="0.45" cy="0.45" r="0.65"><stop offset="0" stop-color="#c99472"/><stop offset="0.7" stop-color="#b07a58"/><stop offset="1" stop-color="#8a5a40"/></radialGradient></defs>
<g clip-path="url(#c4)"><g filter="url(#bl4)"><rect x="-2" y="-2" width="42" height="42" fill="#7cc11e"/><rect x="-2" y="25" width="42" height="1.4" fill="#d8f0b0"/><rect x="-2" y="26.4" width="42" height="14" fill="#6fb31c"/>
<path d="M3 34 L9 29 L14 33 L14 40 H2Z" fill="#c91f2b"/><path d="M26 33 L33 29.6 L37 33 V40 H26Z" fill="#c91f2b"/>
<path d="M29 27 L36 26.6 L37 30 L30 31Z" fill="#15171a"/><path d="M4 30.6 L8 29 L9 31 L5 32.6Z" fill="#1a1d22"/>
<path d="M12 30 H27 V40 H12Z" fill="#a8704e"/>
<ellipse cx="6.4" cy="19.6" rx="1.7" ry="3.6" fill="#9a6646"/><ellipse cx="31.4" cy="19.6" rx="1.6" ry="3.4" fill="#9a6646"/>
<path d="M6.8 15 Q6.6 7 11 5 H26 Q31 7.4 31 15 Q31.4 26 27 31.6 Q23 36 19 36 Q15 36 11 31.6 Q6.4 26 6.8 15Z" fill="url(#sk4)"/>
<path d="M6.6 18 Q4.4 8 8.6 4 Q12.6 0.6 19 0.4 L25 0.2 Q24.4 4 23.2 6.4 Q17 6 12.4 8 Q9 10 8.4 17.6Z" fill="#17181a"/>
<path d="M8.6 23 Q9.4 33 19 35.6 Q28.6 33 29.6 23 Q28 29.6 24.6 30.4 Q19 27.4 13.6 30.4 Q10.2 29.6 8.6 23Z" fill="#2a1e18"/>
<path d="M13.4 25.2 Q19 22.6 24.6 25.2 L24.4 26.4 Q19 24.6 13.8 26.4Z" fill="#21160f"/>
<path d="M14.6 26.6 Q19 28.2 23.8 26.6 Q22.6 29.6 19.2 29.8 Q15.8 29.6 14.6 26.6Z" fill="#f1e6e0"/>
<path d="M10.6 15.6 Q13.4 14.2 16.4 15.4 M21.4 15.4 Q24.4 14.2 27.4 15.6" stroke="#20150f" stroke-width="1.1" fill="none"/>
<ellipse cx="13.6" cy="18" rx="1.8" ry="0.9" fill="#2a1a14"/><ellipse cx="24.4" cy="18" rx="1.8" ry="0.9" fill="#2a1a14"/>
</g></g><circle cx="32" cy="5.4" r="8.9" fill="#fff"/></svg><svg style="left:743px;top:827.3px" width="10" height="10" viewBox="0 0 10 10"><rect x="2.5" y="0.5" width="5" height="2.6" fill="none" stroke="#555" stroke-width="0.9"/><rect x="0.6" y="3.1" width="8.8" height="4.2" rx="0.6" fill="#f4f4f4" stroke="#555" stroke-width="0.9"/><rect x="2.4" y="5.4" width="5.2" height="4" fill="#9a9a9a" stroke="#555" stroke-width="0.8"/><path d="M3.4 7.4 H6.6" stroke="#444" stroke-width="0.8"/></svg><svg style="left:716px;top:917.4px" width="38" height="38" viewBox="0 0 38 38"><defs><clipPath id="c5"><circle cx="19" cy="19" r="19"/></clipPath><filter id="bl5" x="-10%" y="-10%" width="120%" height="120%"><feGaussianBlur stdDeviation="0.55"/></filter><radialGradient id="sk5" cx="0.5" cy="0.5" r="0.65"><stop offset="0" stop-color="#cf9f7a"/><stop offset="0.7" stop-color="#b88560"/><stop offset="1" stop-color="#8f6044"/></radialGradient></defs>
<g clip-path="url(#c5)"><g filter="url(#bl5)"><rect x="-2" y="-2" width="42" height="42" fill="#1f7ab8"/>
<path d="M4 40 L7 33 L13.6 29 L19 33 L25.6 30 L31 33.6 L34 40Z" fill="#d4d0c4"/>
<path d="M13.6 26 H26 L26.6 33 L22 40 H17 L13 33Z" fill="#a87452"/>
<ellipse cx="10" cy="18.4" rx="1.5" ry="3" fill="#a06e4e"/><ellipse cx="30.4" cy="18.4" rx="1.5" ry="3" fill="#a06e4e"/>
<path d="M10.4 14 Q10 8 13 7 H27 Q30.4 8 30.2 14 Q30.6 23 27 28 Q23.6 31.4 20.2 31.4 Q16.8 31.4 13.6 28 Q10 23 10.4 14Z" fill="url(#sk5)"/>
<path d="M10.6 16.4 Q8 6 10.4 2.6 Q13 0.4 19 0.4 L24.6 0.2 Q24.4 5 23 9 Q18.4 8.4 15 10 Q12.6 11.6 12 16.4Z" fill="#101317"/>
<path d="M28.4 12 Q30.4 12.4 30.4 16.2 L29.2 15.6Z" fill="#1a1a1a"/>
<path d="M13 14.8 Q15.4 13.8 17.8 14.8 M22.6 14.8 Q25 13.8 27.4 14.8" stroke="#2c1d15" stroke-width="1" fill="none"/>
<ellipse cx="15.4" cy="16.8" rx="1.6" ry="0.8" fill="#35241b"/><ellipse cx="25" cy="16.8" rx="1.6" ry="0.8" fill="#35241b"/>
<path d="M16.4 24.4 Q20.2 23 24 24.4 Q20.2 24.2 16.4 24.4Z" fill="#5a3a2a" stroke="#5a3a2a" stroke-width="0.8"/>
<ellipse cx="20.2" cy="26" rx="2.8" ry="1.1" fill="#c98b7a"/>
</g></g><circle cx="32" cy="5.4" r="8.9" fill="#fff"/></svg><svg style="left:743px;top:918px" width="10" height="10" viewBox="0 0 10 10"><rect x="2.5" y="0.5" width="5" height="2.6" fill="none" stroke="#555" stroke-width="0.9"/><rect x="0.6" y="3.1" width="8.8" height="4.2" rx="0.6" fill="#f4f4f4" stroke="#555" stroke-width="0.9"/><rect x="2.4" y="5.4" width="5.2" height="4" fill="#9a9a9a" stroke="#555" stroke-width="0.8"/><path d="M3.4 7.4 H6.6" stroke="#444" stroke-width="0.8"/></svg>

<!-- scroll to top -->
<div class="abs" style="left:1850px;top:924px;width:34px;height:34px;border-radius:17px;background:rgba(255,255,255,0.35);box-shadow:0 0 14px rgba(0,0,0,0.03)"></div>
<svg style="left:1860px;top:934px" width="14" height="14" viewBox="0 0 14 14"><path d="M7 13 V1.4 M1.6 6.6 L7 1.2 L12.4 6.6" fill="none" stroke="#25282d" stroke-width="1.4" stroke-linecap="round" stroke-linejoin="round"/></svg>
<!-- cookie bar -->
<div class="abs" style="left:0;top:936px;width:1897px;height:24px;background:linear-gradient(180deg,rgba(0,0,0,0),rgba(0,0,0,0.012) 50%,rgba(0,0,0,0.04))"></div>
<div class="abs" style="left:0;top:960px;width:1897px;height:48px;background:#fff"></div>
<div class="t" style="left:20.3px;top:980px;font-size:11.3px;color:#25282d;letter-spacing:-0.043px">We Use Cookies to personalize your experience on our platform. By using our website and services, you agree to our use of cookies as described in our Cookie Policy.</div>
<div class="abs" style="left:1782px;top:967px;width:64px;height:29px;border-radius:8px;background:#33bff0"></div>
<div class="t" style="left:1794.5px;top:974.5px;font-size:12.4px;font-weight:700;color:#fff;letter-spacing:-0.22px">Accept</div>
<!-- page scrollbar -->
<div class="abs" style="left:1897px;top:182px;width:23px;height:826px;background:#2b2b2b"></div>
<svg style="left:1901px;top:189px" width="15" height="11" viewBox="0 0 15 11"><path d="M7.5 1 L14 10 H1Z" fill="#9f9f9f" stroke="#9f9f9f" stroke-width="1.6" stroke-linejoin="round"/></svg>
<div class="abs" style="left:1902px;top:225.5px;width:13px;height:266px;border-radius:6.5px;background:#9f9f9f"></div>
<svg style="left:1901px;top:992.5px" width="15" height="11" viewBox="0 0 15 11"><path d="M7.5 10 L14 1 H1Z" fill="#9f9f9f" stroke="#9f9f9f" stroke-width="1.6" stroke-linejoin="round"/></svg>


<!-- dropdown popup -->
<div class="abs" style="left:0;top:227px;width:1897px;height:733px;overflow:hidden">
<div class="abs" style="left:429px;top:22.3px;width:287.5px;height:721.5px;border:2px solid #adadad;border-radius:12px;background:#fff;box-shadow:0 20px 46px rgba(0,0,0,0.29);overflow:hidden">
  <div class="abs" style="left:0;top:0;width:262px;height:34.8px;background:#1a67d6"></div>
  <div class="abs" style="left:262px;top:0;width:22px;height:718px;background:#fcfcfc"></div>
</div></div>
<div class="abs" style="left:0;top:960px;width:1897px;height:48px;overflow:hidden">
<div class="abs" style="left:429px;top:-710.7px;width:287.5px;height:721.5px;border:2px solid #adadad;border-radius:12px;background:#fff;box-shadow:0 8px 60px rgba(0,0,0,0.29);overflow:hidden">
  <div class="abs" style="left:262px;top:0;width:22px;height:718px;background:#fcfcfc"></div>
</div></div>
<div class="opt" style="top:261px;color:#fff;-webkit-text-stroke:0.25px #fff;letter-spacing:-0.04px">All Designations/Duties</div>
<div class="opt" style="top:297.4px;letter-spacing:-0.035px">. (State Association )</div>
<div class="opt" style="top:333.4px;letter-spacing:0.01px">A/C Technician (State Association )</div>
<div class="opt" style="top:369.4px">Accreditation Manager (State Association )</div>
<div class="opt" style="top:405.4px;letter-spacing:-0.077px">ACU Liaison (State Association )</div>
<div class="opt" style="top:441.4px;letter-spacing:-0.016px">Anchor (State Association )</div>
<div class="opt" style="top:477.4px;letter-spacing:-0.03px">Apex Council Member (State Association )</div>
<div class="opt" style="top:513.4px">Assistant Accreditation Manager (State Association )</div>
<div class="opt" style="top:549.4px;letter-spacing:-0.04px">Assistant Venue Manager (State Association )</div>
<div class="opt" style="top:585.4px">Asst. Accreditation Manager (State Association )</div>
<div class="opt" style="top:621.4px;letter-spacing:-0.045px">Asst. Broadcast Liaison (State Association )</div>
<div class="opt" style="top:657.4px;letter-spacing:-0.026px">Asst. Security Manager (State Association )</div>
<div class="opt" style="top:693.4px;letter-spacing:-0.034px">Asst. Team Liaison - India (State Association )</div>
<div class="opt" style="top:729.4px;letter-spacing:-0.053px">Baggage Loader (State Association )</div>
<div class="opt" style="top:765.4px;letter-spacing:-0.078px">Ball Boy (State Association )</div>
<div class="opt" style="top:801.4px;letter-spacing:-0.065px">Ball Kid (State Association )</div>
<div class="opt" style="top:837.4px;letter-spacing:-0.037px">Bar Tender (State Association )</div>
<div class="opt" style="top:873.4px;letter-spacing:-0.058px">BCCI Match Observer (State Association )</div>
<div class="opt" style="top:909.4px;letter-spacing:-0.12px">BCCI Observer LO (State Association )</div>
<div class="opt" style="top:945.4px;letter-spacing:-0.029px">Branding (State Association )</div>
<svg style="left:697px;top:256.5px" width="15" height="11" viewBox="0 0 15 11"><path d="M7.5 1 L14 10 H1Z" fill="#8b8b8b" stroke="#8b8b8b" stroke-width="1.6" stroke-linejoin="round"/></svg>
<div class="abs" style="left:698px;top:277px;width:13px;height:109px;border-radius:6.5px;background:#8b8b8b"></div>
<svg style="left:697px;top:953.5px" width="15" height="11" viewBox="0 0 15 11"><path d="M7.5 10 L14 1 H1Z" fill="#8b8b8b" stroke="#8b8b8b" stroke-width="1.6" stroke-linejoin="round"/></svg>


</div>

</body></html>
